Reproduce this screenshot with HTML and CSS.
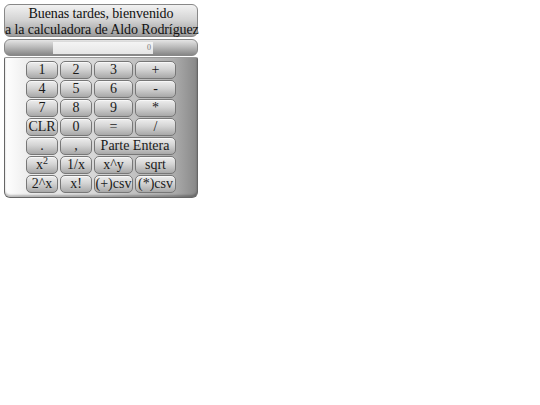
FILE: index.html
```html
<!DOCTYPE html>
<html>
<head>
<meta charset="utf-8">
<link rel="stylesheet" href="styles.css">
</head>
<body>
<div class="calc">
  <div class="header">Buenas tardes, bienvenido<br>a la calculadora de Aldo Rodríguez</div>
  <div class="display"><div class="screen">0</div></div>
  <div class="panel">
    <div class="keys">
      <button class="key">1</button>
      <button class="key">2</button>
      <button class="key">3</button>
      <button class="key">+</button>
      <button class="key">4</button>
      <button class="key">5</button>
      <button class="key">6</button>
      <button class="key">-</button>
      <button class="key">7</button>
      <button class="key">8</button>
      <button class="key">9</button>
      <button class="key">*</button>
      <button class="key">CLR</button>
      <button class="key">0</button>
      <button class="key">=</button>
      <button class="key">/</button>
      <button class="key">.</button>
      <button class="key">,</button>
      <button class="key wide">Parte Entera</button>
      <button class="key">x<sup>2</sup></button>
      <button class="key">1/x</button>
      <button class="key">x^y</button>
      <button class="key">sqrt</button>
      <button class="key">2^x</button>
      <button class="key">x!</button>
      <button class="key">(+)csv</button>
      <button class="key">(*)csv</button>
    </div>
  </div>
</div>
</body>
</html>
```
FILE: styles.css
```css
html, body {
  margin: 0;
  padding: 0;
  background: #fff;
}
body {
  padding: 4px;
  font-family: "Liberation Serif", serif;
}
.calc {
  width: 194px;
  display: flex;
  flex-direction: column;
  gap: 1px;
}
.header {
  height: 33px;
  box-sizing: border-box;
  border: 1px solid #888;
  border-radius: 6px;
  background: linear-gradient(to bottom, #f2f2f2 0%, #d2d2d2 50%, #9c9c9c 100%);
  text-align: center;
  font-size: 14px;
  line-height: 15.5px;
  color: #111;
  padding-top: 1px;
  white-space: nowrap;
  letter-spacing: -0.1px;
}
.display {
  height: 17px;
  box-sizing: border-box;
  border: 1px solid #888;
  border-radius: 6px;
  background: linear-gradient(to bottom, #e4e4e4 0%, #bcbcbc 45%, #868686 100%);
  display: flex;
  justify-content: center;
  align-items: center;
  margin-top: 1px;
}
.screen {
  width: 100px;
  height: 12px;
  box-sizing: border-box;
  background: linear-gradient(to bottom, #f4f4f4, #e6e6e6);
  font-size: 8px;
  line-height: 12px;
  color: #777;
  text-align: right;
  padding-right: 2px;
  margin-left: 4px;
}
.panel {
  height: 141px;
  box-sizing: border-box;
  border: 1px solid #666;
  border-top-color: #999;
  border-radius: 2px 2px 6px 6px;
  background: linear-gradient(to right, #ffffff 0%, #f0f0f0 10%, #d4d4d4 50%, #acacac 88%, #888888 100%);
  padding: 3px 0 0 21px;
  box-shadow: inset 0 -2px 2px rgba(0,0,0,0.25);
}
.keys {
  display: grid;
  grid-template-columns: 32px 32px 39px 41px;
  grid-auto-rows: 18px;
  column-gap: 2px;
  row-gap: 1px;
}
.key {
  margin: 0;
  padding: 0;
  box-sizing: border-box;
  border: 1px solid #777;
  border-radius: 5px;
  background: linear-gradient(to bottom, #eeeeee 0%, #d4d4d4 45%, #a8a8a8 100%);
  font-family: "Liberation Serif", serif;
  font-size: 14px;
  line-height: 16px;
  color: #1a1a1a;
  text-align: center;
  white-space: nowrap;
  box-shadow: inset 0 1px 0 rgba(255,255,255,0.6);
}
.key sup {
  font-size: 10px;
  line-height: 0;
  vertical-align: 5px;
}
.wide {
  grid-column: span 2;
}
```
